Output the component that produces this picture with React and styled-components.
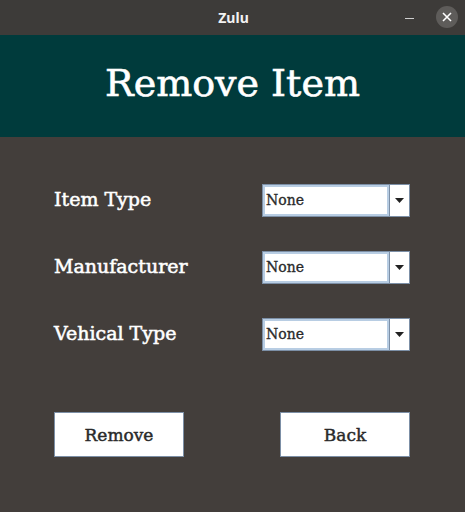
import styled, { createGlobalStyle } from "styled-components";

const GlobalStyle = createGlobalStyle`
  html, body {
    margin: 0;
    padding: 0;
    background: #433e3b;
  }
`;

const serif = `"DejaVu Serif", "Liberation Serif", serif`;

export default function App() {
  const fields = ["Item Type", "Manufacturer", "Vehical Type"];

  return (
    <>
      <GlobalStyle />
      <Window>
        <TitleBar>
          <TitleText>Zulu</TitleText>
          <Controls>
            <Minimize />
            <CloseButton>
              <svg width="10" height="10" viewBox="0 0 10 10">
                <path d="M1 1 L9 9 M9 1 L1 9" stroke="#fff" strokeWidth="1.6" />
              </svg>
            </CloseButton>
          </Controls>
        </TitleBar>
        <Header>
          <Heading>Remove Item</Heading>
        </Header>
        <Body>
          <Form>
            {fields.map((f) => (
              <Row key={f}>
                <Label>{f}</Label>
                <Combo>
                  <ComboText>None</ComboText>
                  <ArrowBox>
                    <svg width="9" height="5" viewBox="0 0 9 5">
                      <path d="M0 0 H9 L4.5 5 Z" fill="#222" />
                    </svg>
                  </ArrowBox>
                </Combo>
              </Row>
            ))}
          </Form>
          <Actions>
            <ActionButton>Remove</ActionButton>
            <ActionButton>Back</ActionButton>
          </Actions>
        </Body>
      </Window>
    </>
  );
}

const Window = styled.div`
  width: 465px;
  height: 512px;
  display: flex;
  flex-direction: column;
  background: #433e3b;
`;

const TitleBar = styled.div`
  height: 35px;
  flex-shrink: 0;
  background: #3d3b39;
  position: relative;
  display: flex;
  align-items: center;
  justify-content: center;
`;

const TitleText = styled.span`
  font-family: "Noto Sans", "DejaVu Sans", sans-serif;
  font-weight: 700;
  font-size: 14px;
  color: #f2f2f2;
  margin-left: 2px;
`;

const Controls = styled.div`
  position: absolute;
  right: 7px;
  top: 6px;
  display: flex;
  align-items: center;
  gap: 22px;
`;

const Minimize = styled.div`
  width: 9px;
  height: 1px;
  background: #cfcfcf;
  margin-top: 3px;
`;

const CloseButton = styled.div`
  width: 22px;
  height: 22px;
  border-radius: 50%;
  background: #5e5c5a;
  display: flex;
  align-items: center;
  justify-content: center;
`;

const Header = styled.div`
  height: 102px;
  flex-shrink: 0;
  background: #003b3c;
  display: flex;
  align-items: center;
  justify-content: center;
`;

const Heading = styled.h1`
  margin: 0;
  font-family: ${serif};
  font-weight: 400;
  font-size: 38px;
  color: #ffffff;
  padding-bottom: 6px;
  -webkit-text-stroke: 0.6px #fff;
`;

const Body = styled.div`
  padding: 47px 55px 0 54px;
  display: flex;
  flex-direction: column;
`;

const Form = styled.div`
  display: flex;
  flex-direction: column;
  gap: 34px;
`;

const Row = styled.div`
  display: flex;
  align-items: center;
  justify-content: space-between;
  height: 33px;
`;

const Label = styled.span`
  font-family: ${serif};
  font-size: 19px;
  font-weight: 400;
  color: #ffffff;
  -webkit-text-stroke: 0.55px #fff;
  margin-top: -3px;
`;

const Combo = styled.div`
  width: 148px;
  height: 33px;
  display: flex;
  border: 1px solid #7c8fa6;
  background: #fff;
  box-sizing: border-box;
`;

const ComboText = styled.div`
  flex: 1;
  border: 2px solid #b8cde3;
  display: flex;
  align-items: center;
  padding-left: 1px;
  font-family: ${serif};
  font-size: 14px;
  font-weight: 400;
  color: #2a2a2a;
  -webkit-text-stroke: 0.3px #2a2a2a;
  padding-bottom: 2px;
`;

const ArrowBox = styled.div`
  width: 19px;
  border-left: 1px solid #7c8fa6;
  display: flex;
  align-items: center;
  justify-content: center;
`;

const Actions = styled.div`
  display: flex;
  justify-content: space-between;
  margin-top: 61px;
`;

const ActionButton = styled.button`
  width: 130px;
  height: 45px;
  background: #fff;
  border: 1px solid #7c8fa6;
  font-family: ${serif};
  font-size: 17px;
  font-weight: 400;
  color: #2a2a2a;
  -webkit-text-stroke: 0.45px #2a2a2a;
  cursor: pointer;
`;
